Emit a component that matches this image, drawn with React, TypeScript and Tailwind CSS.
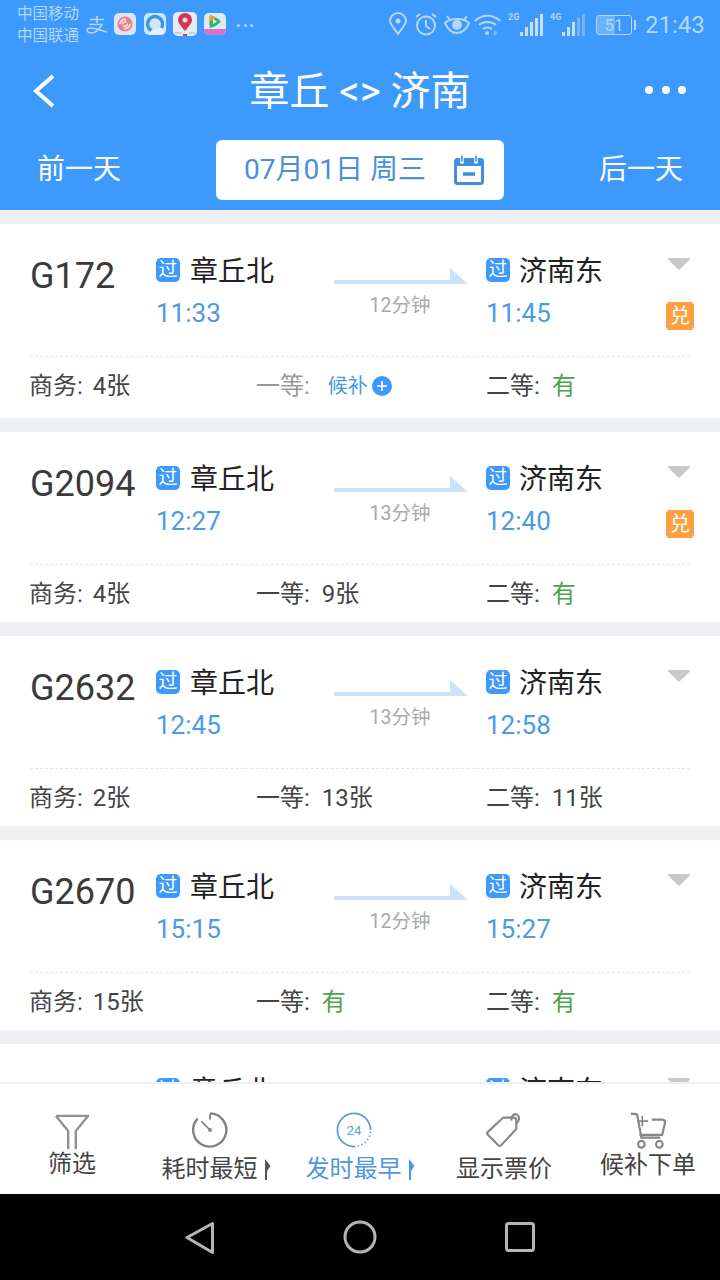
import React from 'react';

interface Seat {
  label: string;
  value: string;
  tone?: 'green' | 'dark' | 'wait';
}

interface Train {
  no: string;
  from: string;
  to: string;
  depart: string;
  arrive: string;
  cost: string;
  exchange?: boolean;
  seats: Seat[];
}

const trains: Train[] = [
  {
    no: 'G172', from: '章丘北', to: '济南东', depart: '11:33', arrive: '11:45', cost: '12分钟', exchange: true,
    seats: [
      { label: '商务', value: '4张', tone: 'dark' },
      { label: '一等', value: '候补', tone: 'wait' },
      { label: '二等', value: '有', tone: 'green' },
    ],
  },
  {
    no: 'G2094', from: '章丘北', to: '济南东', depart: '12:27', arrive: '12:40', cost: '13分钟', exchange: true,
    seats: [
      { label: '商务', value: '4张', tone: 'dark' },
      { label: '一等', value: '9张', tone: 'dark' },
      { label: '二等', value: '有', tone: 'green' },
    ],
  },
  {
    no: 'G2632', from: '章丘北', to: '济南东', depart: '12:45', arrive: '12:58', cost: '13分钟',
    seats: [
      { label: '商务', value: '2张', tone: 'dark' },
      { label: '一等', value: '13张', tone: 'dark' },
      { label: '二等', value: '11张', tone: 'dark' },
    ],
  },
  {
    no: 'G2670', from: '章丘北', to: '济南东', depart: '15:15', arrive: '15:27', cost: '12分钟',
    seats: [
      { label: '商务', value: '15张', tone: 'dark' },
      { label: '一等', value: '有', tone: 'green' },
      { label: '二等', value: '有', tone: 'green' },
    ],
  },
  { no: '', from: '章丘北', to: '济南东', depart: '', arrive: '', cost: '', seats: [] },
];

const Signal = ({ tag, bars, className }: { tag: string; bars: number; className?: string }) => (
  <div className={`relative w-[36px] h-[24px] ${className}`}>
    <span className="absolute left-0 top-[0px] text-[9px] leading-[10px] font-bold">{tag}</span>
    <div className="absolute left-[12px] bottom-0 flex items-end gap-[2px]">
      {[4, 9, 14, 18, 22].map((h, i) => (
        <div
          key={h}
          className={`w-[3px] ${i < bars ? 'bg-[#c5e0fd]' : 'bg-[#74b4fb]'}`}
          style={{ height: h }}
        />
      ))}
    </div>
  </div>
);

const StatusBar = () => (
  <div className="relative h-[50px] flex items-start text-[#b3d7fd]">
    <div className="ml-[17px] mt-[3px] w-[66px] text-[15.5px] leading-[22px]">
      <div>中国移动</div>
      <div>中国联通</div>
    </div>
    {/* alipay mark */}
    <svg width="24" height="20" viewBox="0 0 24 20" className="ml-[2px] mt-[15px]" fill="none" stroke="currentColor" strokeWidth="1.6">
      <path d="M5 4.500h14M12 1v7M4 9.500h13c-2 5-8 9-11 8.500-4-.6-5-3-3-4.500 4-2.500 12 2 19 3.500" />
    </svg>
    <div className="ml-[5px] mt-[13px] w-[22px] h-[22px] rounded-[5px] bg-[#dbe6f5] flex items-center justify-center">
      <svg width="18" height="18" viewBox="0 0 18 18" fill="none" stroke="#d9475a" strokeWidth="1.800">
        <circle cx="9" cy="9" r="7.500" fill="#e8808c" stroke="none" />
        <path d="M4 9c0-3 3-5 6-4.500M14 9c0 3-3 5-6 4.500M6.500 9.500c0-2 2-3 4-2.500M11.500 8.500c0 2-2 3-4 2.500" stroke="#f6dfe3" />
      </svg>
    </div>
    <div className="ml-[8px] mt-[13px] w-[22px] h-[22px] rounded-[5px] bg-[#cfe5fb] flex items-center justify-center overflow-hidden">
      <svg width="22" height="22" viewBox="0 0 22 22" fill="none">
        <path d="M17.500 15A7.500 7.500 0 1 0 10 18.500" stroke="#3d93e4" strokeWidth="3.400" />
        <path d="M6 20c1-4 4-5 7-4 2-2 6-1 7 2v4H6z" fill="#e3f1fd" />
      </svg>
    </div>
    <div className="ml-[7px] mt-[12px] w-[24px] h-[24px] rounded-[5px] bg-[#e4ebf2] flex items-start justify-center">
      <svg width="24" height="24" viewBox="0 0 24 24">
        <path d="M12 19C7 13 5 10.500 5 8a7 7 0 0 1 14 0c0 2.500-2 5-7 11z" fill="#cf3a52" />
        <circle cx="12" cy="8" r="2.500" fill="#f6d9de" />
        <path d="M2 20h6l2 2H2zM16 20h6v2h-6z" fill="#bcd6c2" />
        <path d="M10 22h4v2h-4z" fill="#cf3a52" />
      </svg>
    </div>
    <div className="ml-[7px] mt-[13px] w-[22px] h-[22px] rounded-[5px] bg-[#dfe9f2] overflow-hidden flex flex-col items-center">
      <svg width="16" height="15" viewBox="0 0 16 15" className="mt-[1px]">
        <path d="M3 1c-1 4-1 9 0 13 4-1 8-3 11-6.500C11 4.500 7 2 3 1z" fill="#2fb36f" />
        <path d="M3 1c-1 3-1 5-.8 7L9 4C7 3 5 1.500 3 1z" fill="#f2a23a" />
        <path d="M6 5v5l4-2.500z" fill="#dff3e6" />
      </svg>
      <div className="w-full flex-1 bg-[#d873c4]" />
    </div>
    <div className="ml-[11px] mt-[24px] flex gap-[3.500px]">
      <span className="w-[3px] h-[3px] rounded-full bg-[#b3d7fd]" />
      <span className="w-[3px] h-[3px] rounded-full bg-[#b3d7fd]" />
      <span className="w-[3px] h-[3px] rounded-full bg-[#b3d7fd]" />
    </div>

    <div className="absolute left-[388px] top-[12px] flex items-start">
      <svg width="20" height="24" viewBox="0 0 20 24" fill="none" stroke="currentColor" strokeWidth="2">
        <path d="M10 22C5 15 2 12 2 9a8 8 0 0 1 16 0c0 3-3 6-8 13z" />
        <circle cx="10" cy="9" r="2.500" fill="currentColor" stroke="none" />
      </svg>
      <svg width="24" height="24" viewBox="0 0 24 24" fill="none" stroke="currentColor" strokeWidth="2" className="ml-[6px]">
        <circle cx="12" cy="13.500" r="9" />
        <path d="M12 8v6l4 3M2 5l4-3M22 5l-4-3" />
      </svg>
      <svg width="26" height="22" viewBox="0 0 26 22" fill="none" stroke="currentColor" strokeWidth="2" className="ml-[6px] mt-[2px]">
        <path d="M1 9c3 7 8 10 12 10s9-3 12-10c-3-3-7-4-12-4S4 6 1 9z" />
        <circle cx="13" cy="11" r="5" fill="currentColor" stroke="none" />
        <path d="M3 2l3 4M23 2l-3 4" />
      </svg>
      <svg width="28" height="22" viewBox="0 0 28 22" fill="none" stroke="currentColor" strokeWidth="2" className="ml-[4px] mt-[2px]">
        <path d="M1 7c7-7 18-7 25 0M5 11c5-4 12-4 17 0M9 15c3-2 6-2 9 0" />
        <circle cx="13" cy="19" r="2" fill="currentColor" stroke="none" />
        <path d="M20 16l4 3-4 3z" fill="currentColor" stroke="none" opacity="0.6" />
      </svg>
      <Signal tag="2G" bars={5} className="ml-[6px]" />
      <Signal tag="4G" bars={3} className="ml-[6px]" />
      <div className="ml-[10px] mt-[3px] w-[36px] h-[20px] rounded-[3px] border border-[#b3d7fd] relative flex items-center justify-center text-[17px] leading-none">
        <div className="absolute left-0 top-0 bottom-0 w-[18px] bg-[#b3d7fd]/40" />
        <span className="relative">51</span>
        <div className="absolute -right-[5px] top-[4px] w-[2px] h-[10px] bg-[#b3d7fd]" />
      </div>
    </div>
    <div className="absolute left-[645px] top-[9px] text-[24px] leading-[32px]">21:43</div>
  </div>
);

const Header = () => (
  <div className="h-[210px] shrink-0 bg-[#3d99fb] flex flex-col">
    <StatusBar />
    <div className="relative h-[80px] flex items-center justify-center text-white">
      <svg width="24" height="34" viewBox="0 0 24 34" fill="none" stroke="#fff" strokeWidth="4" className="absolute left-[32px] top-[24px]">
        <path d="M21 2L4 17l17 15" />
      </svg>
      <div className="text-[40px] leading-[46px] mt-[4px] whitespace-nowrap">章丘 &lt;&gt; 济南</div>
      <div className="absolute left-[645px] top-[36px] flex gap-[8.500px]">
        <span className="w-[8px] h-[8px] rounded-full bg-white" />
        <span className="w-[8px] h-[8px] rounded-full bg-white" />
        <span className="w-[8px] h-[8px] rounded-full bg-white" />
      </div>
    </div>
    <div className="mt-[10px] flex items-center h-[60px] text-white text-[28px]">
      <div className="w-[216px] pl-[37px]">前一天</div>
      <div className="w-[288px] h-[60px] rounded-[6px] bg-white flex items-center pl-[28px] text-[#4a90d9] text-[28px]">
        <span className="w-[209px] whitespace-nowrap">07月01日 周三</span>
        <svg width="32" height="32" viewBox="0 0 32 32" fill="none" stroke="#3d8fe0" strokeWidth="3">
          <rect x="2.500" y="5.500" width="27" height="24" rx="2" />
          <path d="M2 9.500h28" strokeWidth="5" />
          <path d="M9 1.500v8M23 1.500v8" strokeWidth="3.600" stroke="#fff" />
          <path d="M9 1.500v6M23 1.500v6" strokeWidth="1.600" />
          <path d="M10 20h12" strokeWidth="3.500" />
        </svg>
      </div>
      <div className="flex-1 pl-[95px]">后一天</div>
    </div>
  </div>
);

const PassBadge = () => (
  <span className="w-[24px] h-[24px] rounded-[5px] bg-[#3d99fb] text-white text-[19px] leading-[24px] text-center shrink-0">过</span>
);

const SeatCell = ({ seat, first, className }: { seat: Seat; first: boolean; className: string }) => (
  <div className={`flex items-center h-[28px] whitespace-nowrap ${className}`}>
    <span className={seat.tone === 'wait' ? 'text-[#999]' : 'text-[#444]'}>{seat.label}:</span>
    {seat.tone === 'wait' ? (
      <>
        <span className="ml-[18px] text-[20px] text-[#4a98e6]">{seat.value}</span>
        <span className="ml-[4px] w-[20px] h-[20px] rounded-full bg-[#3d99fb] flex items-center justify-center">
          <svg width="12" height="12" viewBox="0 0 12 12" stroke="#fff" strokeWidth="1.600">
            <path d="M6 1v10M1 6h10" />
          </svg>
        </span>
      </>
    ) : (
      <span className={`${first ? 'ml-[10px]' : 'ml-[12px]'} ${seat.tone === 'green' ? 'text-[#4ba34f]' : 'text-[#444]'}`}>{seat.value}</span>
    )}
  </div>
);

const TrainCard = ({ train }: { train: Train }) => {
  const tall = train.seats[1]?.tone === 'wait';
  return (
    <div className="bg-white shrink-0">
      <div className="h-[133px] flex mx-[30px] border-b border-dashed border-[#e6e6e6]">
        <div className="w-[126px] pt-[32px] text-[36px] leading-[40px] text-[#3a3a3a] whitespace-nowrap">{train.no}</div>
        <div className="w-[178px] pt-[34px]">
          <div className="flex items-start h-[24px] gap-[10px]">
            <PassBadge />
            <span className="text-[28px] leading-[28px] text-[#222] whitespace-nowrap">{train.from}</span>
          </div>
          <div className="mt-[16px] text-[26px] leading-[30px] text-[#4b9ae8]">{train.depart}</div>
        </div>
        <div className="w-[152px] pt-[44px] flex flex-col">
          <svg width="134" height="18" viewBox="0 0 134 18">
            <path d="M0 12h116V0l18 16H0z" fill="#cbe3fb" />
          </svg>
          <div className="w-[132px] mt-[6px] text-center text-[19.500px] leading-[28px] text-[#aaa]">{train.cost}</div>
        </div>
        <div className="relative flex-1 pt-[34px]">
          <div className="flex items-start h-[24px] gap-[9px]">
            <PassBadge />
            <span className="text-[28px] leading-[28px] text-[#222] whitespace-nowrap">{train.to}</span>
          </div>
          <div className="mt-[16px] text-[26px] leading-[30px] text-[#4b9ae8]">{train.arrive}</div>
          <svg width="24" height="14" viewBox="0 0 24 14" className="absolute right-[-1px] top-[33px]">
            <path d="M2 1h20a1 1 0 0 1 .7 1.700L12 13 1.300 2.700A1 1 0 0 1 2 1z" fill="#c9c9c9" />
          </svg>
          {train.exchange && (
            <span className="absolute right-[-4px] top-[78px] w-[28px] h-[28px] rounded-[4px] bg-[#ff9f3f] text-white text-[20px] leading-[28px] text-center">兑</span>
          )}
        </div>
      </div>
      <div className={`${tall ? 'h-[61px]' : 'h-[57px]'} flex items-start pt-[15px] text-[24px]`}>
        {train.seats.map((seat, i) => (
          <SeatCell
            key={seat.label}
            seat={seat}
            first={i === 0}
            className={i === 0 ? 'ml-[29px] w-[227px]' : i === 1 ? 'w-[230px]' : ''}
          />
        ))}
      </div>
    </div>
  );
};

const SortArrow = ({ color }: { color: string }) => (
  <svg width="6" height="21" viewBox="0 0 6 21" className="ml-[7px] mb-[3px] shrink-0">
    <path d="M0 0l5.500 7L2 12v9H0z" fill={color} />
  </svg>
);

const SortTab = ({ icon, label, arrow, className }: { icon: React.ReactNode; label: string; arrow: string; className?: string }) => (
  <div className={`w-[144px] flex justify-center pt-[28px] ${className ?? ''}`}>
    <div className="flex items-end h-[71px]">
      <div className="flex flex-col items-center">
        {icon}
        <span className="mt-[7px] leading-[28px] whitespace-nowrap">{label}</span>
      </div>
      <SortArrow color={arrow} />
    </div>
  </div>
);

const BottomBar = () => (
  <div className="h-[112px] shrink-0 bg-white border-t-2 border-[#eeeff3] flex text-[#444] text-[24px]">
    <div className="w-[144px] flex flex-col items-center pt-[30px]">
      <svg width="36" height="36" viewBox="0 0 38 38" fill="none" stroke="#8f9295" strokeWidth="2.500">
        <path d="M2 2h34L23 18v19M15 37V18L2 2" strokeLinejoin="round" />
      </svg>
      <span className="leading-[28px]">筛选</span>
    </div>
    <SortTab
      label="耗时最短"
      arrow="#555"
      icon={
        <svg width="36" height="36" viewBox="0 0 38 38" fill="none" stroke="#7f8387" strokeWidth="2.500">
          <path d="M19 1.500A17.500 17.500 0 1 1 6 7" />
          <path d="M10 10l9 9" strokeWidth="1.800" />
          <circle cx="19" cy="19" r="2" fill="#7f8387" stroke="none" />
          <path d="M19 2v6" strokeWidth="2" />
        </svg>
      }
    />
    <SortTab
      label="发时最早"
      arrow="#4f97dc"
      className="text-[#4f97dc]"
      icon={
        <svg width="36" height="36" viewBox="0 0 38 38" fill="none" stroke="#5a9de0" strokeWidth="1.800">
          <path d="M36.500 19A17.500 17.500 0 1 0 19 36.500" />
          <path d="M19 36.500a17.500 17.500 0 0 0 17.500-17.500" strokeDasharray="1.500 2.500" />
          <text x="19" y="24" textAnchor="middle" fontSize="14" fill="#5a9de0" stroke="none" fontFamily="Roboto, sans-serif">24</text>
        </svg>
      }
    />
    <div className="w-[144px] flex flex-col items-center pt-[28px]">
      <svg width="36" height="36" viewBox="0 0 38 38" fill="none" stroke="#84888c" strokeWidth="2.300">
        <path d="M2 21L18 6h11c2 0 3 1 3 3v9L16 35c-1 1-2 1-3 0L2 24c-1-1-1-2 0-3z" strokeLinejoin="round" />
        <path d="M27 9c-1-5 3-8 6-6 3 2 2 7-1 9" />
      </svg>
      <span className="mt-[7px] leading-[28px] whitespace-nowrap">显示票价</span>
    </div>
    <div className="w-[144px] flex flex-col items-center pt-[28px]">
      <svg width="36" height="38" viewBox="0 0 38 40" fill="none" stroke="#84888c" strokeWidth="2.300">
        <path d="M1 2h4c2 0 3 1 3 3l4 22h20" />
        <path d="M23 8h11c2 0 3 1 3 3l-3 13H10" />
        <path d="M13 4v11M8 9.500h11" strokeWidth="1.800" />
        <circle cx="12" cy="34" r="3.500" />
        <circle cx="31" cy="34" r="3.500" />
      </svg>
      <span className="mt-[1px] leading-[28px] whitespace-nowrap">候补下单</span>
    </div>
  </div>
);

const NavBar = () => (
  <div className="h-[86px] shrink-0 bg-black">
    <svg width="720" height="86" viewBox="0 0 720 86" fill="none" stroke="#b4b4b4" strokeWidth="3" strokeLinejoin="round">
      <path d="M212.500 29.500v29L187 43.500z" />
      <circle cx="360" cy="43" r="15" />
      <rect x="506.500" y="29.500" width="27" height="27" rx="2" />
    </svg>
  </div>
);

export default function App() {
  return (
    <div
      className="h-[1280px] w-[720px] flex flex-col overflow-hidden bg-[#eeeff3]"
      style={{ fontFamily: 'Roboto, "Noto Sans CJK SC", sans-serif' }}
    >
      <Header />
      <div className="flex-1 min-h-0 overflow-hidden pt-[14px] flex flex-col gap-[14px]">
        {trains.map((t, i) => (
          <TrainCard key={i} train={t} />
        ))}
      </div>
      <BottomBar />
      <NavBar />
    </div>
  );
}
